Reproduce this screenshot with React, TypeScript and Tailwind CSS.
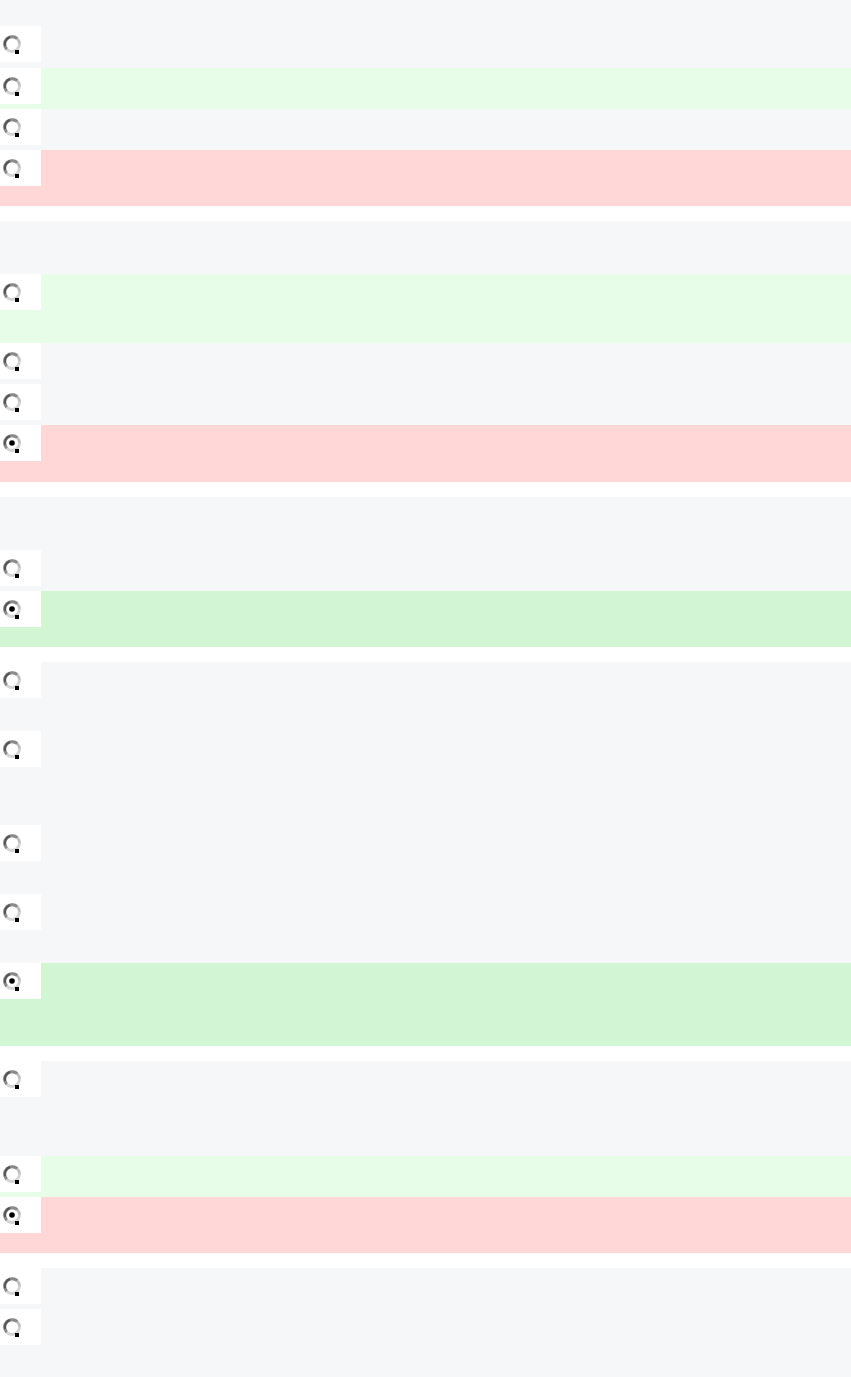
type Tone = 'plain' | 'correct' | 'right' | 'wrong';

interface Row {
  h: string;
  tone: Tone;
  checked?: boolean;
}

interface Block {
  head: string;
  rows: Row[];
}

const toneClass: Record<Tone, string> = {
  plain: 'bg-[#f6f7f9]',
  correct: 'bg-[#e7fde7]',
  right: 'bg-[#d2f5d3]',
  wrong: 'bg-[#ffd7d7]',
};

const blocks: Block[] = [
  {
    head: 'h-[26px]',
    rows: [
      { h: 'h-[42px]', tone: 'plain' },
      { h: 'h-[41px]', tone: 'correct' },
      { h: 'h-[41px]', tone: 'plain' },
      { h: 'h-[56px]', tone: 'wrong' },
    ],
  },
  {
    head: 'h-[53px]',
    rows: [
      { h: 'h-[69px]', tone: 'correct' },
      { h: 'h-[41px]', tone: 'plain' },
      { h: 'h-[41px]', tone: 'plain' },
      { h: 'h-[57px]', tone: 'wrong', checked: true },
    ],
  },
  {
    head: 'h-[53px]',
    rows: [
      { h: 'h-[41px]', tone: 'plain' },
      { h: 'h-[56px]', tone: 'right', checked: true },
    ],
  },
  {
    head: 'h-0',
    rows: [
      { h: 'h-[69px]', tone: 'plain' },
      { h: 'h-[94px]', tone: 'plain' },
      { h: 'h-[69px]', tone: 'plain' },
      { h: 'h-[69px]', tone: 'plain' },
      { h: 'h-[83px]', tone: 'right', checked: true },
    ],
  },
  {
    head: 'h-0',
    rows: [
      { h: 'h-[95px]', tone: 'plain' },
      { h: 'h-[41px]', tone: 'correct' },
      { h: 'h-[56px]', tone: 'wrong', checked: true },
    ],
  },
  {
    head: 'h-0',
    rows: [
      { h: 'h-[41px]', tone: 'plain' },
      { h: 'h-[80px]', tone: 'plain' },
    ],
  },
];

// old-style bitmap radio, scaled up and blurry
function Radio({ checked }: { checked?: boolean }) {
  return (
    <svg width="20" height="21" viewBox="0 0 20 21" className="mt-[8px] ml-[2px]">
      <circle cx="10" cy="10" r="7.5" fill="#ffffff" stroke="#d4d4d4" strokeWidth="3" />
      <path d="M4.7 15.3 A7.5 7.5 0 0 1 15.3 4.7" fill="none" stroke="#8a8a8a" strokeWidth="3" />
      <path d="M3 12 A7.5 7.5 0 0 1 8 3" fill="none" stroke="#555555" strokeWidth="2" />
      <path d="M15.3 4.7 A7.5 7.5 0 0 1 17.5 10" fill="none" stroke="#bdbdbd" strokeWidth="2" />
      <rect x="13" y="16" width="4" height="4" fill="#000000" />
      {checked && <circle cx="10" cy="10" r="2.8" fill="#000000" />}
    </svg>
  );
}

export default function App() {
  return (
    <div className="w-[851px] min-h-[1377px] bg-white flex flex-col gap-[15px] overflow-hidden">
      {blocks.map((block, bi) => (
        <div key={bi} className="bg-[#f6f7f9] flex flex-col">
          <div className={block.head} />
          {block.rows.map((row, ri) => (
            <div key={ri} className={`${row.h} ${toneClass[row.tone]} flex items-start`}>
              <div className="w-[41px] h-[36px] bg-white shrink-0">
                <Radio checked={row.checked} />
              </div>
            </div>
          ))}
        </div>
      ))}
    </div>
  );
}
